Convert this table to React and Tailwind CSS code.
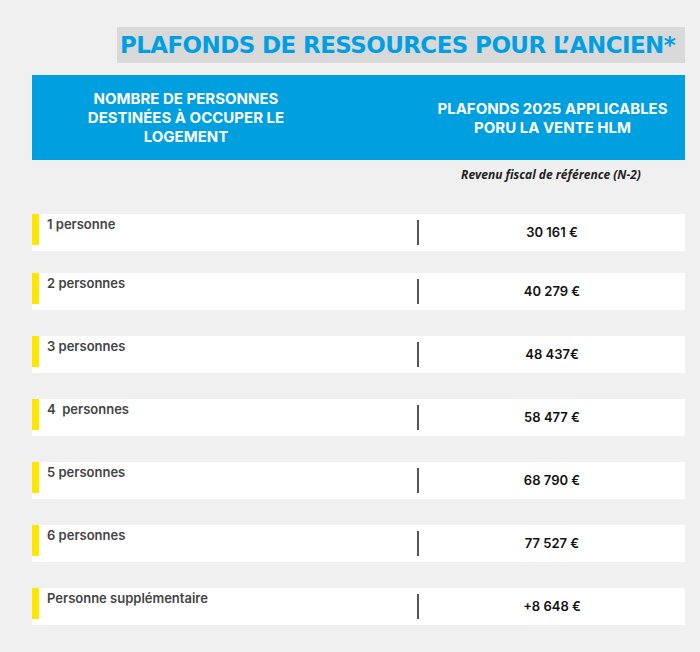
import React from "react";

const rows = [
  { label: "1 personne", value: "30 161 €", mt: "mt-0" },
  { label: "2 personnes", value: "40 279 €", mt: "mt-[22px]" },
  { label: "3 personnes", value: "48 437€", mt: "mt-[26px]" },
  { label: "4  personnes", value: "58 477 €", mt: "mt-[26px]" },
  { label: "5 personnes", value: "68 790 €", mt: "mt-[26px]" },
  { label: "6 personnes", value: "77 527 €", mt: "mt-[26px]" },
  { label: "Personne supplémentaire", value: "+8 648 €", mt: "mt-[26px]" },
];

const App = () => {
  return (
    <div className="w-[700px] h-[652px] bg-[#f0f0f0] overflow-hidden font-['Inter',sans-serif]">
      {/* TITLE */}
      <div className="pt-[27px] pl-[117px]">
        <div className="w-[568px] h-[36px] bg-[#d9d9d9] flex items-center pl-[3px]">
          <h1 className="font-['DejaVu_Sans',sans-serif] text-[#009fe3] text-[23px] font-bold tracking-[-0.6px] leading-none whitespace-nowrap">
            PLAFONDS DE RESSOURCES POUR L’ANCIEN*
          </h1>
        </div>
      </div>

      {/* HEADER */}
      <div className="mt-[12px] ml-[32px] w-[653px] h-[85px] bg-[#009fe0] flex text-white font-bold text-[15px] leading-[19px] text-center">
        <div className="w-[308px] flex items-center justify-center">
          <p className="w-[200px]">
            NOMBRE DE PERSONNES DESTINÉES À OCCUPER LE LOGEMENT
          </p>
        </div>
        <div className="flex-1 flex items-center justify-center pl-[80px]">
          <p className="w-[250px]">PLAFONDS 2025 APPLICABLES PORU LA VENTE HLM</p>
        </div>
      </div>

      {/* SUB HEADER */}
      <div className="ml-[417px] w-[268px] h-[54px] pt-[1px] text-center">
        <span className="font-['Open_Sans',sans-serif] italic font-bold text-[12px] text-[#222]">
          Revenu fiscal de référence (N-2)
        </span>
      </div>

      {/* ROWS */}
      <div className="flex flex-col">
        {rows.map((r) => (
          <div
            key={r.label}
            className={`${r.mt} ml-[32px] w-[653px] h-[37px] bg-white flex`}
          >
            <div className="w-[7px] h-[31px] bg-[#ffe600] shrink-0" />
            <div className="w-[378px] pl-[8px] pt-[1px] text-[13px] font-semibold text-[#444] whitespace-pre leading-[18px]">
              {r.label}
            </div>
            <div className="w-[2px] h-[25px] mt-[6px] bg-[#555] shrink-0" />
            <div className="flex-1 flex items-center justify-center text-[13px] font-semibold text-[#111]">
              {r.value}
            </div>
          </div>
        ))}
      </div>
    </div>
  );
};

export default App;
